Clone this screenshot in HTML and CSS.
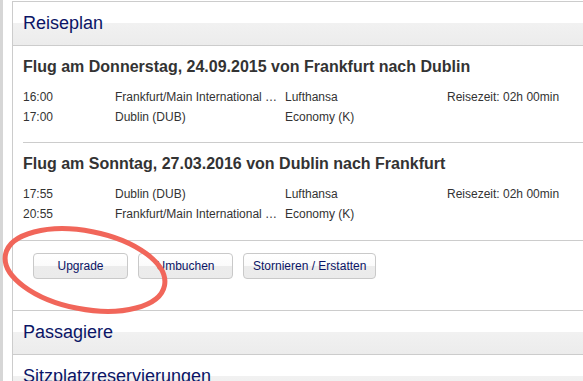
FILE: index.html
```html
<!DOCTYPE html>
<html lang="de">
<head>
    <meta charset="UTF-8">
    <meta name="viewport" content="width=device-width, initial-scale=1.0">
    <title>Buchung - Reiseplan</title>
    <link rel="stylesheet" href="styles.css">
</head>
<body>
    <div class="page">
        <div class="rail"></div>
        <div class="content">
            <!-- Reiseplan -->
            <section class="panel panel-first">
                <h2 class="panel-title">Reiseplan</h2>
                <div class="panel-body">
                    <div class="flight">
                        <h3>Flug am Donnerstag, 24.09.2015 von Frankfurt nach Dublin</h3>
                        <div class="flight-row">
                            <span>16:00</span>
                            <span>Frankfurt/Main International …</span>
                            <span>Lufthansa</span>
                            <span>Reisezeit: 02h 00min</span>
                        </div>
                        <div class="flight-row">
                            <span>17:00</span>
                            <span>Dublin (DUB)</span>
                            <span>Economy (K)</span>
                            <span></span>
                        </div>
                    </div>
                    <div class="flight">
                        <h3>Flug am Sonntag, 27.03.2016 von Dublin nach Frankfurt</h3>
                        <div class="flight-row">
                            <span>17:55</span>
                            <span>Dublin (DUB)</span>
                            <span>Lufthansa</span>
                            <span>Reisezeit: 02h 00min</span>
                        </div>
                        <div class="flight-row">
                            <span>20:55</span>
                            <span>Frankfurt/Main International …</span>
                            <span>Economy (K)</span>
                            <span></span>
                        </div>
                    </div>
                    <div class="actions">
                        <button type="button">Upgrade</button>
                        <button type="button">Umbuchen</button>
                        <button type="button">Stornieren / Erstatten</button>
                    </div>
                </div>
            </section>

            <section class="panel">
                <h2 class="panel-title">Passagiere</h2>
            </section>

            <section class="panel">
                <h2 class="panel-title">Sitzplatzreservierungen</h2>
            </section>

            <!-- Markierung um den Upgrade-Button -->
            <svg class="highlight" width="176" height="96" viewBox="0 0 176 96">
                <ellipse cx="85" cy="47" rx="81" ry="39" transform="rotate(11 85 47)"
                         fill="none" stroke="#f1665a" stroke-width="5"/>
            </svg>
        </div>
    </div>
</body>
</html>
```

FILE: styles.css
```css
body, html {
    margin: 0;
    padding: 0;
    height: 100%;
    overflow: hidden;
    background-color: #fff;
    font-family: "Liberation Sans", Arial, Helvetica, sans-serif;
}

.page {
    display: flex;
    height: 100%;
}

.rail {
    width: 3px;
    background-color: #d6d6d6;
    flex-shrink: 0;
}

.content {
    position: relative;
    flex: 1;
    margin-left: 9px;
    padding-top: 1px;
}

.panel {
    border-left: 1px solid #ccc;
}

.panel-first {
    border-top: 1px solid #ccc;
}

.panel-title {
    margin: 0;
    height: 43px;
    padding-left: 10px;
    line-height: 42px;
    font-size: 18px;
    font-weight: normal;
    color: #0b1566;
    background: linear-gradient(to bottom, #fff 0%, #fff 49%, #f1f1f1 50%, #ececec 100%);
    border-bottom: 1px solid #ccc;
}

.panel-body {
    border-bottom: 1px solid #ccc;
}

.flight {
    margin-left: 10px;
    padding: 11px 0 15px;
    border-bottom: 1px solid #ccc;
}

.flight:nth-child(2) {
    padding-bottom: 16px;
    border-bottom: none;
}

.flight h3 {
    margin: 0 0 10px;
    font-size: 16px;
    line-height: 20px;
    color: #333;
}

.flight-row {
    display: grid;
    grid-template-columns: 92px 170px 162px 1fr;
    font-size: 12px;
    line-height: 20px;
    color: #333;
}

.flight-row span {
    white-space: nowrap;
}

.actions {
    display: flex;
    gap: 10px;
    padding: 12px 20px 31px;
    border-top: 1px solid #ccc;
}

.actions button {
    height: 26px;
    min-width: 95px;
    padding: 0 9px;
    border: 1px solid #c9c9c9;
    border-radius: 4px;
    background: linear-gradient(to bottom, #fff 0%, #fbfbfb 50%, #ececec 51%, #ebebeb 100%);
    color: #0b1566;
    font-family: inherit;
    font-size: 12px;
    cursor: pointer;
}

.highlight {
    position: absolute;
    left: -12px;
    top: 223px;
}
```
